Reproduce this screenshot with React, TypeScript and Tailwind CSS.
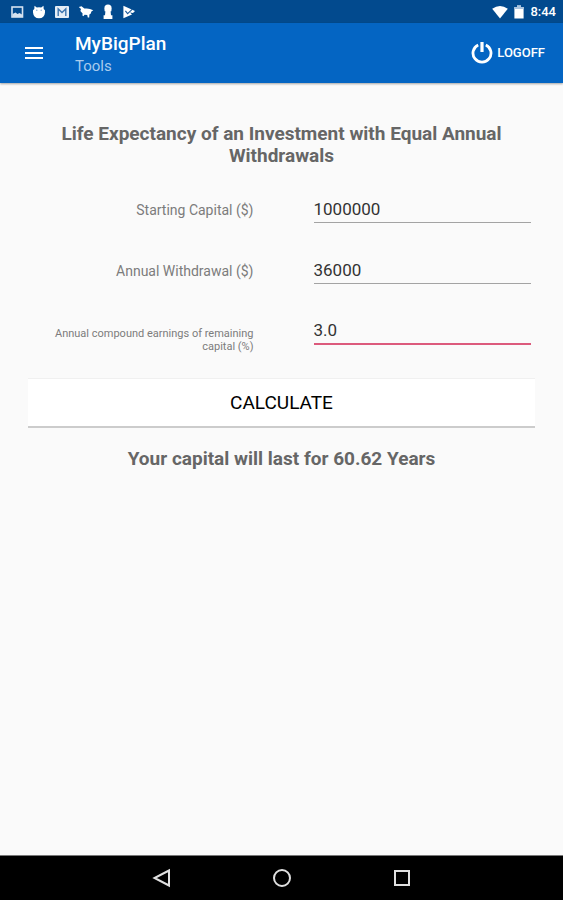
import { useState, type FormEvent, type ReactNode } from "react";
import { clsx } from "clsx";

function StatusBar() {
  return (
    <div className="flex h-[23px] items-center justify-between bg-[#024a8e] pl-[10px] pr-[7px] text-white">
      <div className="flex items-center gap-2">
        <svg viewBox="0 0 14 14" className="size-[14px]" fill="none">
          <rect x="2" y="2" width="10.5" height="10" stroke="#d5e2f0" strokeWidth="1.6" />
          <path d="M2.5 9 L5.5 7.4 L7.5 9 L9.5 8 L12 9.5 V12 H2.5Z" fill="#d5e2f0" />
        </svg>
        <svg viewBox="0 0 14 14" className="size-[14px]" fill="#fff">
          <path d="M2.5 0.8 L4.8 2.6 Q7 1.8 9.2 2.6 L11.5 0.8 L11.7 4 Q13.6 5 13 7.4 Q12.5 13 7 13.3 Q1.5 13 1 7.4 Q0.4 5 2.3 4Z" />
          <circle cx="4.8" cy="5.2" r="0.7" fill="#7ea6d0" />
          <circle cx="9.2" cy="5.2" r="0.7" fill="#7ea6d0" />
        </svg>
        <svg viewBox="0 0 16 14" className="h-[14px] w-4" fill="none">
          <rect x="1" y="1" width="14" height="12" rx="1" fill="#e6eef6" />
          <path d="M4.2 11 V4 L8 7.6 L11.8 4 V11" stroke="#3f76b0" strokeWidth="1.4" />
        </svg>
        <svg viewBox="0 0 16 14" className="h-[14px] w-4" fill="#fff">
          <path d="M0.8 2 L3.5 1.2 L6.4 3.6 Q9.5 3 12 4 L15.3 5.2 L13.4 6.4 L12.8 8.6 L11.4 9.6 L11.2 12.4 L9.8 12.4 L9.2 10 L6.6 9.8 L5.4 11.2 L4.4 10.6 L4.6 8.6 L2.4 6 L3 4Z" />
        </svg>
        <svg viewBox="0 0 12 16" className="h-4 w-3" fill="#fff">
          <circle cx="6" cy="4.2" r="3.6" />
          <path d="M2.6 5.4 H9.4 V7.2 H8.6 L9 11.2 H10.4 V15 H1.6 V11.2 H3 L3.4 7.2 H2.6Z" />
        </svg>
        <svg viewBox="0 0 14 14" className="size-[14px]" fill="none">
          <path d="M1.4 0.8 L13 6 L11 8 L8 7.4 L10 9.4 L1.4 13.2Z" fill="#fff" />
          <path d="M3.4 5.8 L5.6 8.6 L10.4 4.2" stroke="#1c5a9b" strokeWidth="1.1" />
        </svg>
      </div>
      <div className="flex items-center gap-[6px]">
        <svg viewBox="0 0 16 14" className="h-[14px] w-4" fill="#fff">
          <path d="M8 13.4 L0.2 3.8 Q8 -1.8 15.8 3.8Z" />
        </svg>
        <svg viewBox="0 0 10 14" className="h-[14px] w-[10px]" fill="#fff">
          <path d="M3 0.5 H7 V2 H9.6 V13.6 H0.4 V2 H3Z" />
          <path d="M3 0.5 H7 V2 H9.6 V4 H0.4 V2 H3Z" fill="#a9c3de" />
        </svg>
        <span className="text-[13px] leading-4 font-medium">8:44</span>
      </div>
    </div>
  );
}

function AppBar() {
  return (
    <header className="flex h-[60px] items-center bg-[#0465c3] pl-[25px] pr-[18px] text-white shadow-[0_1px_2px_rgba(0,0,0,0.35)]">
      <button type="button" aria-label="Menu" className="flex">
        <svg viewBox="0 0 18 14" className="h-[14px] w-[18px]" stroke="#fff" strokeWidth="2">
          <path d="M0 2 H18 M0 7 H18 M0 12 H18" />
        </svg>
      </button>
      <div className="ml-8 grow pt-[2px]">
        <h1 className="text-[19px] leading-6 font-medium">MyBigPlan</h1>
        <p className="text-[15px] leading-5 text-[#a9cbed]">Tools</p>
      </div>
      <button type="button" className="flex items-center gap-1 text-[13px] leading-4 font-medium">
        <svg viewBox="0 0 22 24" className="h-6 w-[22px]" fill="none" stroke="#fff" strokeWidth="2.8">
          <path d="M7.2 3.9 A9 9 0 1 0 14.8 3.9" />
          <path d="M11 1 V11" strokeWidth="3.2" />
        </svg>
        LOGOFF
      </button>
    </header>
  );
}

function Field({
  id,
  label,
  value,
  onChange,
  small,
  active,
}: {
  id: string;
  label: string;
  value: string;
  onChange: (value: string) => void;
  small?: boolean;
  active?: boolean;
}) {
  return (
    <div className="grid h-[61px] grid-cols-2 items-start gap-14">
      <label
        htmlFor={id}
        className={clsx(
          "text-right text-[#7c7c7c]",
          small ? "pt-[10px] text-[11px] leading-[13px]" : "pt-[5px] text-[14px] leading-5",
        )}
      >
        {label}
      </label>
      <div className="px-1">
        <input
          id={id}
          inputMode="decimal"
          value={value}
          onChange={(e) => onChange(e.target.value)}
          className={clsx(
            "h-7 w-full bg-transparent text-[17px] leading-5 text-[#333333] outline-none",
            active ? "border-b-2 border-[#dc5a7c]" : "border-b border-[#a3a3a3]",
          )}
        />
      </div>
    </div>
  );
}

function NavButton({ label, children }: { label: string; children: ReactNode }) {
  return (
    <button type="button" aria-label={label} className="flex">
      <svg viewBox="0 0 20 20" className="size-5" fill="none" stroke="#e0e0e0" strokeWidth="2">
        {children}
      </svg>
    </button>
  );
}

// Number of years until equal yearly withdrawals use up the capital
function yearsRemaining(capital: number, withdrawal: number, rate: number) {
  if (rate === 0) {
    return capital / withdrawal;
  }
  const r = rate / 100;
  return -Math.log(1 - (capital * r) / withdrawal) / Math.log(1 + r);
}

export default function App() {
  const [capital, setCapital] = useState("1000000");
  const [withdrawal, setWithdrawal] = useState("36000");
  const [rate, setRate] = useState("3.0");
  const [years, setYears] = useState(() => yearsRemaining(1000000, 36000, 3));

  const calculate = (e: FormEvent) => {
    e.preventDefault();
    setYears(yearsRemaining(Number(capital), Number(withdrawal), Number(rate)));
  };

  return (
    <div className="flex min-h-screen flex-col bg-[#fafafa] font-[Roboto,sans-serif]">
      <StatusBar />
      <AppBar />
      <main className="grow px-7 pt-10">
        <h2 className="text-center text-[19px] leading-[22px] font-bold text-[#666666]">
          Life Expectancy of an Investment with Equal Annual Withdrawals
        </h2>
        <form onSubmit={calculate} className="pt-7">
          <Field id="capital" label="Starting Capital ($)" value={capital} onChange={setCapital} />
          <Field
            id="withdrawal"
            label="Annual Withdrawal ($)"
            value={withdrawal}
            onChange={setWithdrawal}
          />
          <Field
            id="rate"
            label="Annual compound earnings of remaining capital (%)"
            value={rate}
            onChange={setRate}
            small
            active
          />
          <button
            type="submit"
            className="h-[50px] w-full border-t border-b-2 border-t-[#f0f0f0] border-b-[#cccccc] bg-white text-[19px] leading-6 text-black"
          >
            CALCULATE
          </button>
        </form>
        <p className="pt-5 text-center text-[19px] leading-[22px] font-bold text-[#666666]">
          Your capital will last for {Number.isFinite(years) ? years.toFixed(2) : "∞"} Years
        </p>
      </main>
      <nav className="flex h-[45px] items-center justify-center gap-[100px] border-t border-[#777777] bg-black">
        <NavButton label="Back">
          <path d="M17 2.5 V17.5 L2.5 10Z" />
        </NavButton>
        <NavButton label="Home">
          <circle cx="10" cy="10" r="8" />
        </NavButton>
        <NavButton label="Recent apps">
          <rect x="3" y="3" width="14" height="14" />
        </NavButton>
      </nav>
    </div>
  );
}
